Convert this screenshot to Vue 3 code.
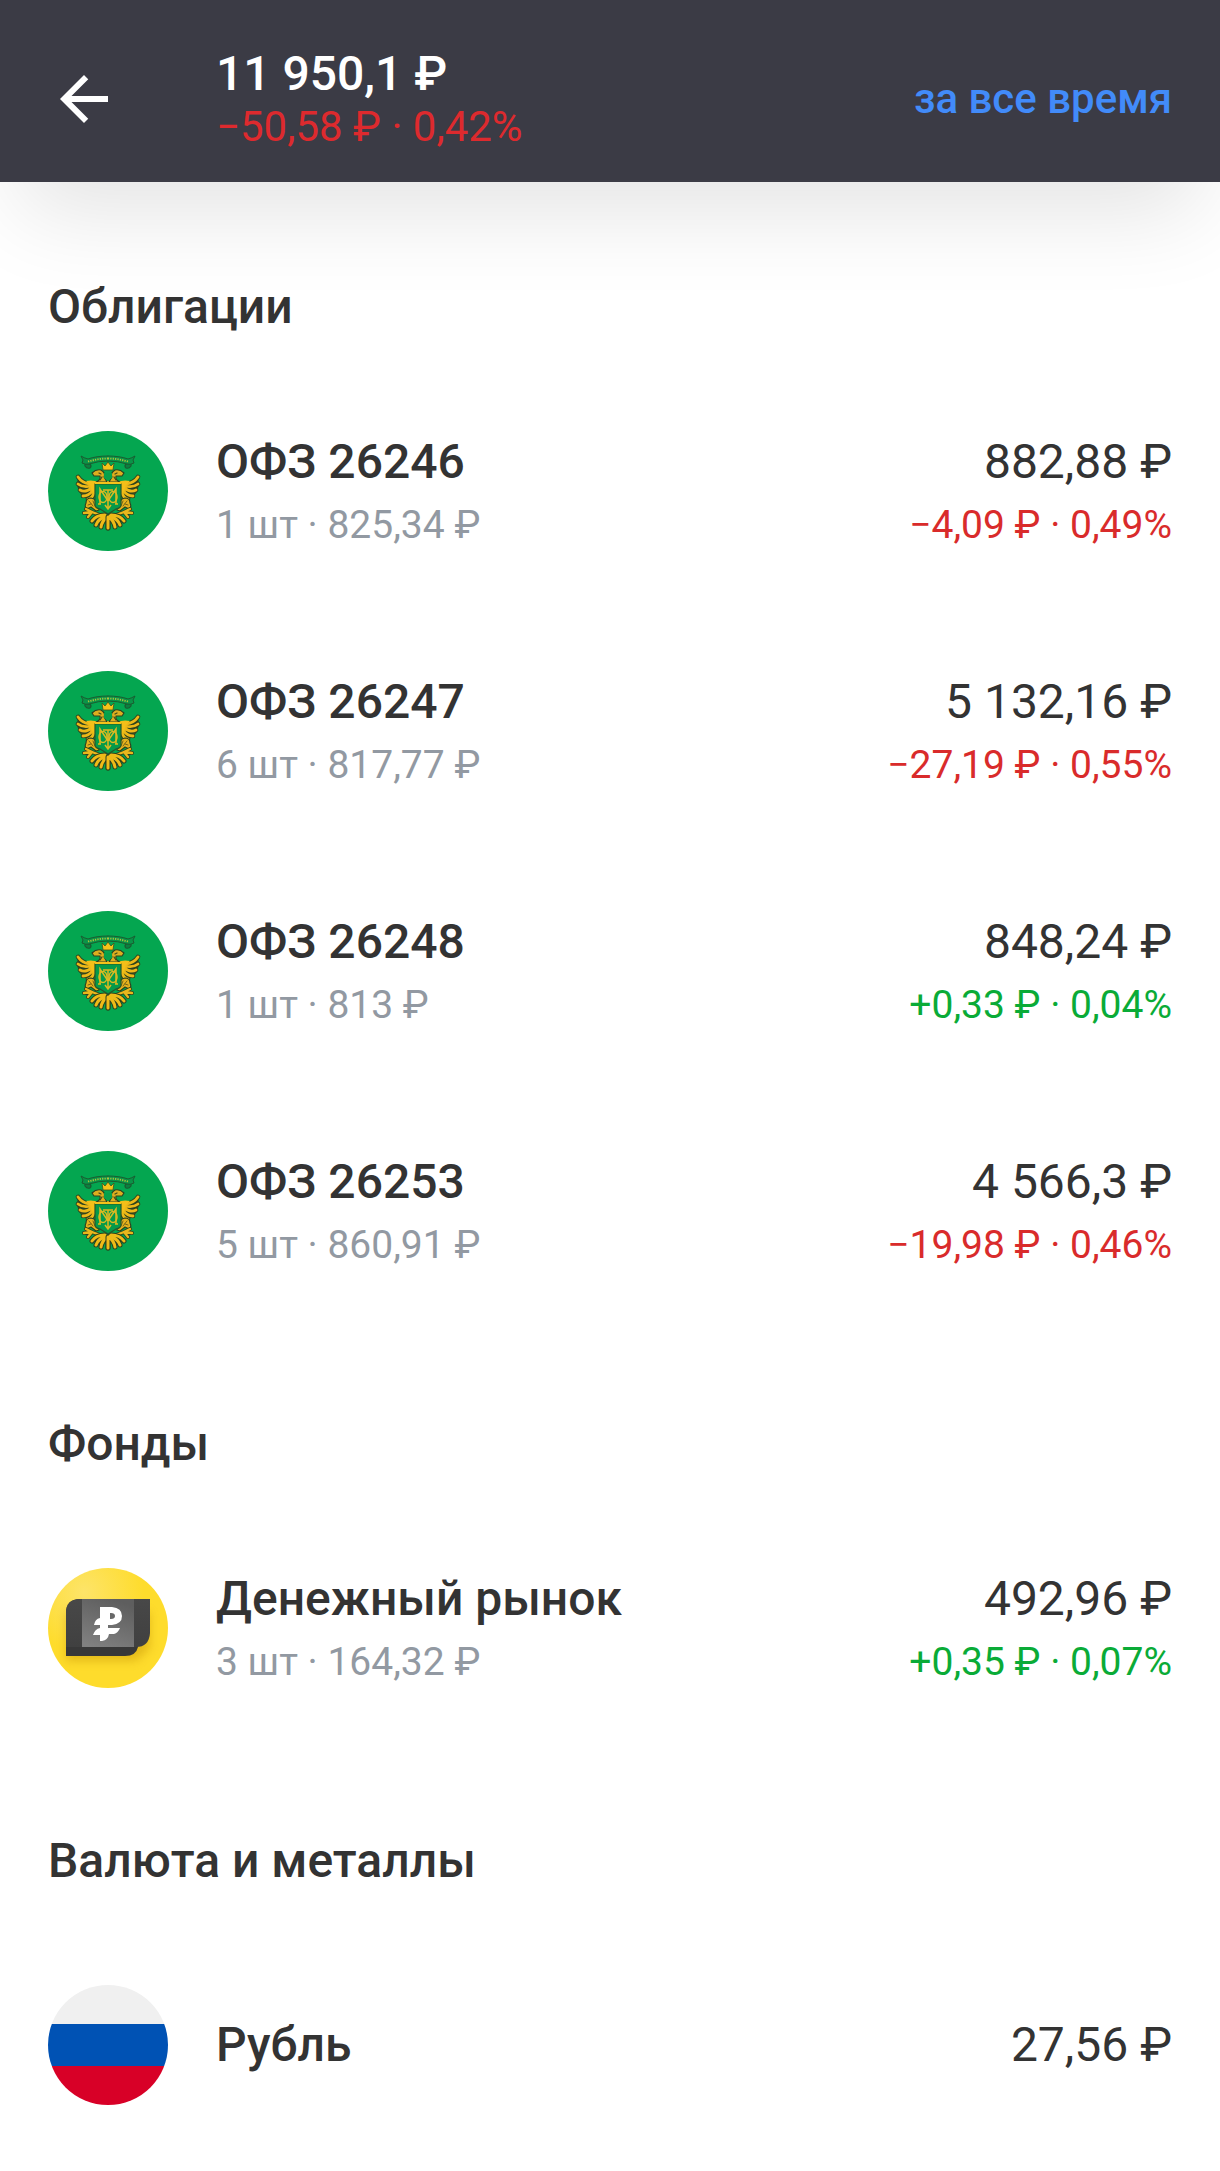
<template>
  <div class="portfolio">
    <header class="header">
      <button type="button" class="back" aria-label="Назад">
        <svg viewBox="0 0 24 24" aria-hidden="true">
          <path d="M20 11H7.83l5.59-5.59L12 4l-8 8 8 8 1.41-1.41L7.83 13H20v-2z" />
        </svg>
      </button>
      <div class="total">
        <h1 class="total-value">11 950,1 ₽</h1>
        <p class="total-change">−50,58 ₽ · 0,42%</p>
      </div>
      <button type="button" class="period">за все время</button>
    </header>

    <main class="content">
      <section v-for="section in sections" :key="section.title">
        <h2 class="section-title">{{ section.title }}</h2>
        <ul class="list">
          <li v-for="item in section.items" :key="item.name" class="row">
            <!-- coat of arms, the left half is mirrored -->
            <svg v-if="section.icon === 'bond'" class="avatar" viewBox="0 0 120 120" aria-hidden="true">
              <rect width="120" height="120" fill="#04a650" />
              <g v-for="half in halves" :key="half" :transform="half" stroke-linejoin="round" stroke-linecap="round">
                <!-- ribbon -->
                <path d="M41 33 Q36 32 37 35 Q39 38 42 37 Q44 35 42 33" fill="#0b8040" stroke="#1b5c31" stroke-width="1.2" />
                <path d="M60 25 Q48 25 40 28 Q36 27 33 25 L35 29 L34 32 Q38 34 41 33 Q50 30 60 30" fill="#0a9448" stroke="#1b5c31" stroke-width="1" />
                <path d="M40 30.500 Q50 27.500 60 27.500" fill="none" stroke="#b4c23a" stroke-width="1.8" stroke-dasharray="1.2 1.2" stroke-linecap="butt" />
                <!-- wing -->
                <path d="M30 44 Q34 51 40 50 L49 51 L47 66 L41 69 L35 66 L31 61 L29 54 Z" fill="#3d4a1c" />
                <g fill="none" stroke="#2d421e" stroke-width="4.6">
                  <path d="M42 53 Q34 52 30 46 M43 55 Q35 57 30 53 M44 57 Q37 62 32 59 M45 59 Q41 65 35 65 M46 61 Q45 67 40 68" />
                </g>
                <g fill="none" stroke="#edb818" stroke-width="2.8">
                  <path d="M42 53 Q34 52 30 46 M43 55 Q35 57 30 53 M44 57 Q37 62 32 59 M45 59 Q41 65 35 65 M46 61 Q45 67 40 68" />
                </g>
                <path d="M38 50 Q43 49 47 50 L60 50 V54 H48 L47 63 L44 60 L42 54 Z" fill="#f3bf19" />
                <!-- head -->
                <path d="M59 51 H48 Q53 49 52 45 L46 45 L44 42 Q48 38 53 39 Q58 42 56 46 Z" fill="#dcae1f" stroke="#2d421e" stroke-width="1.1" />
                <path d="M51 42 L53 43 M54 46 L52 49" fill="none" stroke="#3d4a1c" stroke-width="1.2" />
                <!-- side figure and claw -->
                <path d="M43 67 Q38 67 38 72 Q36 76 39 78 L43 76 L48 80 L51 79 Q50 72 46 68 Z" fill="#e6b21c" stroke="#2d421e" stroke-width="1.1" />
                <path d="M41 70 L45 75 M40 74 L43 73 M45 70 L47 75" fill="none" stroke="#59521b" stroke-width="0.8" />
                <path d="M52 84 L44 81 M44 81 L38 78 M44 81 L36 82 M44 81 L40 86" fill="none" stroke="#2d421e" stroke-width="4" />
                <path d="M52 84 L44 81 M44 81 L38 78 M44 81 L36 82 M44 81 L40 86" fill="none" stroke="#e9b71b" stroke-width="2.4" />
                <!-- tail -->
                <g fill="none" stroke="#2d421e" stroke-width="5">
                  <path d="M57 84 Q48 84 44 90 M58 85 Q50 88 48 94 M59 86 Q54 90 53 96 M60 86 V97" />
                </g>
                <g fill="none" stroke="#efbb18" stroke-width="3">
                  <path d="M57 84 Q48 84 44 90 M58 85 Q50 88 48 94 M59 86 Q54 90 53 96 M60 86 V97" />
                </g>
              </g>
              <path d="M47 53 H73 V74 Q73 77 68 78 L60 83 L52 78 Q47 77 47 74 Z" fill="#059a49" stroke="#28542a" stroke-width="1.2" />
              <path d="M47 52 H73" stroke="#f4c21a" stroke-width="2" />
              <path d="M55 39 L54 32 L57 35 L60 31 L63 35 L66 32 L65 39 Z" fill="#f5c31a" stroke="#3f5420" stroke-width="0.8" />
              <path d="M56 42 H64 V47 L60 50 L56 47 Z" fill="#06a04b" />
              <!-- monogram -->
              <g fill="none" stroke="#dcb921" stroke-width="1.5">
                <ellipse cx="55" cy="66" rx="4" ry="5.500" />
                <ellipse cx="65" cy="66" rx="4" ry="5.500" />
                <path d="M50 73 H53 M52 73 V58 L60 70 L68 58 V73 M67 73 H70 M55 59 H65 M60 59 V77 M57 74 L60 78 L63 74" />
              </g>
            </svg>

            <svg v-else-if="section.icon === 'fund'" class="avatar" viewBox="0 0 120 120" aria-hidden="true">
              <defs>
                <radialGradient id="fund-bg" cx="0.3" cy="0.2" r="0.5">
                  <stop offset="0" stop-color="#fde469" />
                  <stop offset="1" stop-color="#fedc2c" />
                </radialGradient>
                <linearGradient id="fund-face" x1="0.6" y1="0" x2="0.2" y2="1">
                  <stop offset="0" stop-color="#5e5e5e" />
                  <stop offset="1" stop-color="#808080" />
                </linearGradient>
                <linearGradient id="fund-side" x1="0" y1="0" x2="0" y2="1">
                  <stop offset="0" stop-color="#484848" />
                  <stop offset="1" stop-color="#404040" />
                </linearGradient>
                <filter id="fund-shadow" x="-20%" y="-20%" width="140%" height="160%">
                  <feGaussianBlur stdDeviation="5" />
                </filter>
              </defs>
              <rect width="120" height="120" fill="url(#fund-bg)" />
              <path d="M18 44 H102 V80 L88 93 H18 Z" fill="#c08a00" opacity="0.4" filter="url(#fund-shadow)" />
              <path d="M18 88 V45 Q18 31 32 31 H90 V79 Q88 88 77 88 Z" fill="#383838" />
              <path d="M18 79 V45 Q18 31 32 31 H34 V79 Z" fill="url(#fund-side)" />
              <path d="M34 31 H86 V79 H34 Z" fill="url(#fund-face)" />
              <path d="M86 31 H102 V65 Q101 79 88 79 H86 Z" fill="url(#fund-side)" />
              <path d="M52 39 H64 Q74 40 74 48 Q74 56 64 57 H60 V60 H72 Q70 65 66 66 H61 Q60 72 54 73 H52 V67 H45 Q47 61 52 60 V57 H46 Q47 51 52 50 Z M62 45 V51 H63 Q67 51 67 48 Q67 45 63 45 Z" fill="#fff" fill-rule="evenodd" />
            </svg>

            <svg v-else class="avatar" viewBox="0 0 120 120" aria-hidden="true">
              <rect width="120" height="40" fill="#f0f0f0" />
              <rect y="39" width="120" height="42" fill="#0052b4" />
              <rect y="81" width="120" height="39" fill="#d80027" />
            </svg>

            <div class="info">
              <h3 class="name">{{ item.name }}</h3>
              <p v-if="item.amount" class="amount">{{ item.amount }}</p>
            </div>
            <div class="sum">
              <p class="value">{{ item.value }}</p>
              <p v-if="item.change" class="change" :class="{ up: item.change.startsWith('+') }">{{ item.change }}</p>
            </div>
          </li>
        </ul>
      </section>
    </main>
  </div>
</template>

<script setup>
const halves = ['translate(0 0)', 'translate(120 0) scale(-1 1)'];

const sections = [
  {
    title: 'Облигации',
    icon: 'bond',
    items: [
      { name: 'ОФЗ 26246', amount: '1 шт · 825,34 ₽', value: '882,88 ₽', change: '−4,09 ₽ · 0,49%' },
      { name: 'ОФЗ 26247', amount: '6 шт · 817,77 ₽', value: '5 132,16 ₽', change: '−27,19 ₽ · 0,55%' },
      { name: 'ОФЗ 26248', amount: '1 шт · 813 ₽', value: '848,24 ₽', change: '+0,33 ₽ · 0,04%' },
      { name: 'ОФЗ 26253', amount: '5 шт · 860,91 ₽', value: '4 566,3 ₽', change: '−19,98 ₽ · 0,46%' },
    ],
  },
  {
    title: 'Фонды',
    icon: 'fund',
    items: [
      { name: 'Денежный рынок', amount: '3 шт · 164,32 ₽', value: '492,96 ₽', change: '+0,35 ₽ · 0,07%' },
    ],
  },
  {
    title: 'Валюта и металлы',
    icon: 'rub',
    items: [{ name: 'Рубль', value: '27,56 ₽' }],
  },
];
</script>

<style>
body {
  margin: 0;
  background: #fff;
}
</style>

<style scoped>
.portfolio {
  font-family: Roboto, 'Noto Sans', sans-serif;
  font-size: 48px;
  color: #333;
}

h1,
h2,
h3,
p,
ul {
  margin: 0;
  padding: 0;
  font-size: inherit;
  font-weight: 400;
}

button {
  padding: 0;
  border: 0;
  background: none;
  font-family: inherit;
  cursor: pointer;
}

.header {
  display: flex;
  align-items: center;
  padding: 46px 48px 30px;
  background: #3b3b45;
  box-shadow: 0 50px 90px -20px rgba(0, 0, 0, 0.11);
}

.back {
  width: 72px;
  height: 72px;
  margin-right: 96px;
}

.back svg {
  display: block;
  fill: #fff;
}

.total {
  flex: 1;
}

.total-value {
  font-weight: 500;
  line-height: 56px;
  color: #fff;
}

.total-change {
  font-size: 42px;
  line-height: 50px;
  color: #dd2a2e;
}

.period {
  font-size: 42px;
  font-weight: 500;
  line-height: 60px;
  color: #428bf9;
}

.content {
  padding-top: 12px;
}

.section-title {
  padding: 81px 48px 32px;
  font-weight: 500;
  line-height: 64px;
}

.list {
  list-style: none;
}

.row {
  display: flex;
  align-items: center;
  gap: 48px;
  min-height: 240px;
  padding: 0 48px;
}

.avatar {
  flex: none;
  width: 120px;
  height: 120px;
  border-radius: 50%;
}

.info {
  flex: 1;
}

.name {
  font-weight: 500;
  line-height: 68px;
}

.value {
  line-height: 68px;
}

.amount,
.change {
  font-size: 39px;
  line-height: 58px;
}

.amount {
  color: #9299a2;
}

.sum {
  text-align: right;
}

.change {
  color: #d92b2b;
}

.change.up {
  color: #0aab37;
}
</style>
